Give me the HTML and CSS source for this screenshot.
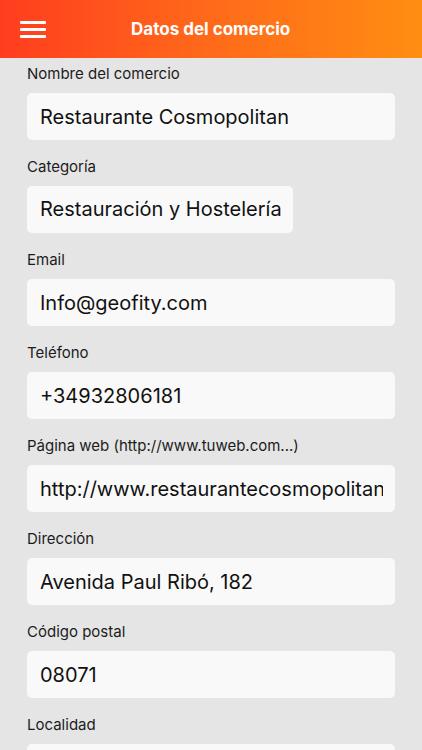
FILE: index.html
```html
<!DOCTYPE html>
<html lang="es">
<head>
  <meta charset="UTF-8">
  <title>Datos del comercio</title>
  <link rel="stylesheet" href="styles.css">
</head>
<body>

  <header class="topbar">
    <button class="menu-btn" type="button" aria-label="Menú">
      <span></span><span></span><span></span>
    </button>
    <h1>Datos del comercio</h1>
  </header>

  <form class="shop-form">
    <div class="field">
      <label for="nombre">Nombre del comercio</label>
      <input type="text" id="nombre" value="Restaurante Cosmopolitan">
    </div>

    <div class="field">
      <label for="categoria">Categoría</label>
      <div class="select-box" id="categoria"><span>Restauración y Hostelería</span></div>
    </div>

    <div class="field">
      <label for="email">Email</label>
      <input type="text" id="email" value="Info@geofity.com">
    </div>

    <div class="field">
      <label for="telefono">Teléfono</label>
      <input type="text" id="telefono" value="+34932806181">
    </div>

    <div class="field">
      <label for="web">Página web (http://www.tuweb.com...)</label>
      <input type="text" id="web" value="http://www.restaurantecosmopolitan.com">
    </div>

    <div class="field">
      <label for="direccion">Dirección</label>
      <input type="text" id="direccion" value="Avenida Paul Ribó, 182">
    </div>

    <div class="field">
      <label for="cp">Código postal</label>
      <input type="text" id="cp" value="08071">
    </div>

    <div class="field">
      <label for="localidad">Localidad</label>
      <input type="text" id="localidad" value="Barcelona">
    </div>
  </form>

</body>
</html>
```

FILE: styles.css
```css
body {
  margin: 0;
  font-family: Inter, Roboto, "Noto Sans", Arial, sans-serif;
  background-color: #e5e5e5;
  color: #1a1a1a;
  overflow: hidden;
}
.topbar {
  height: 58px;
  display: flex;
  align-items: center;
  background: linear-gradient(to right, #ff3d1e, #ff6a1a 50%, #ff8e12);
}
.menu-btn {
  width: 26px;
  height: 17px;
  margin-left: 20px;
  padding: 0;
  border: none;
  background: none;
  display: flex;
  flex-direction: column;
  justify-content: space-between;
}
.menu-btn span {
  display: block;
  height: 3px;
  border-radius: 1px;
  background-color: #fff;
}
.topbar h1 {
  margin: 0 0 0 85px;
  color: #fff;
  font-size: 17px;
  font-weight: bold;
}
.shop-form {
  padding: 5px 27px 0 27px;
}
.field {
  margin-bottom: 16px;
}
.field label {
  display: block;
  height: 20px;
  padding-top: 1px;
  margin-bottom: 9px;
  line-height: 20px;
  font-size: 15px;
  color: #1c1c1c;
}
.field input, .select-box {
  box-sizing: border-box;
  width: 100%;
  height: 47px;
  padding: 0 12px 0 13px;
  border: none;
  border-radius: 5px;
  background-color: #f9f9f9;
  font-family: inherit;
  font-size: 20px;
  color: #111;
  outline: none;
}
.select-box {
  width: 266px;
  line-height: 47px;
  white-space: nowrap;
}
.select-box span {
  display: block;
  overflow: hidden;
}
```
